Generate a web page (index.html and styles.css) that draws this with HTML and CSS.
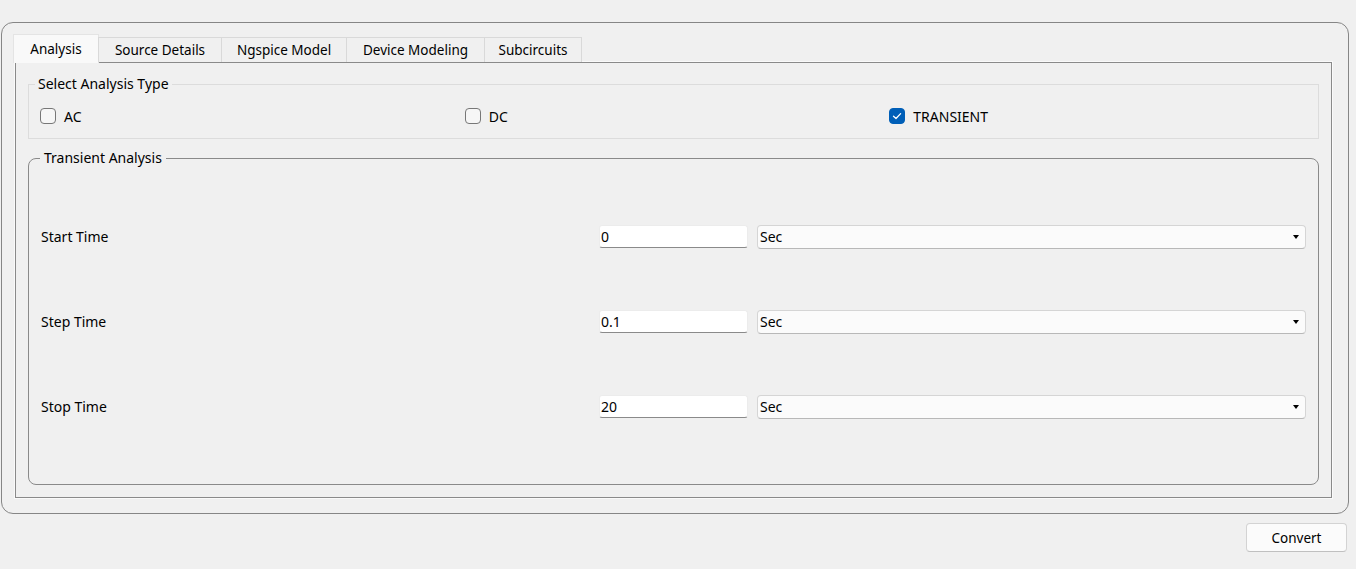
FILE: index.html
```html
<!DOCTYPE html>
<html lang="en">
<head>
<meta charset="utf-8">
<title>Kicad to Ngspice Converter</title>
<link rel="stylesheet" href="styles.css">
</head>
<body>
<div class="window">
  <div class="frame">
    <div class="tabwidget">
      <div class="tabbar">
        <div class="tab active">Analysis</div>
        <div class="tab">Source Details</div>
        <div class="tab">Ngspice Model</div>
        <div class="tab">Device Modeling</div>
        <div class="tab">Subcircuits</div>
      </div>
      <div class="pane">
        <fieldset class="group flat">
          <legend>Select Analysis Type</legend>
          <div class="checks">
            <label class="check"><span class="box"></span>AC</label>
            <label class="check"><span class="box"></span>DC</label>
            <label class="check"><span class="box checked"><svg width="10" height="8" viewBox="0 0 10 8"><path d="M1.5 4.2 L4 6.5 L8.6 1.6" fill="none" stroke="#fff" stroke-width="1.3" stroke-linecap="round" stroke-linejoin="round"/></svg></span>TRANSIENT</label>
          </div>
        </fieldset>
        <fieldset class="group boxed">
          <legend>Transient Analysis</legend>
          <div class="form">
            <div class="row">
              <span class="lbl">Start Time</span>
              <span class="input">0</span>
              <span class="combo">Sec<span class="arrow"></span></span>
            </div>
            <div class="row">
              <span class="lbl">Step Time</span>
              <span class="input">0.1</span>
              <span class="combo">Sec<span class="arrow"></span></span>
            </div>
            <div class="row">
              <span class="lbl">Stop Time</span>
              <span class="input">20</span>
              <span class="combo">Sec<span class="arrow"></span></span>
            </div>
          </div>
        </fieldset>
      </div>
    </div>
  </div>
  <div class="actions">
    <button class="btn">Convert</button>
  </div>
</div>
</body>
</html>
```
FILE: styles.css
```css
* { box-sizing: border-box; }
html, body {
  margin: 0;
  padding: 0;
  background: #f0f0f0;
}
body {
  font-family: "Noto Sans", "Open Sans", sans-serif;
  font-size: 13.5px;
  color: #000;
}
.window {
  padding: 22px 8px 0 1px;
}
.frame {
  width: 1348px;
  height: 492px;
  border: 1px solid #868686;
  border-radius: 12px;
  padding: 11px 0 0 11px;
}
.tabwidget {
  width: 1319px;
}
.tabbar {
  display: flex;
  height: 28px;
  align-items: flex-end;
  position: relative;
  z-index: 1;
}
.tab {
  height: 25px;
  padding: 0 16px;
  display: flex;
  align-items: center;
  justify-content: center;
  background: #f0f0f0;
  border: 1px solid #d9d9d9;
  border-bottom: none;
  margin-left: -1px;
  white-space: nowrap;
}
.tab.active {
  background: #f9f9f9;
  border-color: #e4e4e4;
  margin-left: 0;
  margin-bottom: -1px;
  height: 29px;
  width: 86px;
}
.tab:nth-child(2) { width: 124px; }
.tab:nth-child(3) { width: 126px; }
.tab:nth-child(4) { width: 139px; }
.tab:nth-child(5) { width: 98px; }
.pane {
  margin-left: 2px;
  height: 436px;
  border: 1px solid #8a8a8a;
  box-shadow: 0 0 0 1px #fafafa;
  padding: 12px 12px 0 12px;
  font-size: 14px;
}
.group {
  margin: 0;
  min-width: 0;
}
.group legend {
  padding: 0 3px;
  margin-left: 6px;
  line-height: 18px;
}
.flat {
  border: 1px solid #dcdcdc;
  height: 64px;
  padding: 0;
}
.checks {
  display: grid;
  grid-template-columns: repeat(3, 1fr);
  padding: 0 4px 0 11px;
  height: 36px;
  align-items: center;
  margin-top: 5px;
}
.check {
  display: flex;
  align-items: center;
  gap: 8px;
}
.box {
  width: 16px;
  height: 16px;
  border: 1px solid #777;
  border-radius: 4px;
  background: #f6f6f6;
  display: inline-flex;
  align-items: center;
  justify-content: center;
}
.box.checked {
  background: #005fb8;
  border-color: #005fb8;
}
.boxed {
  margin-top: 10px;
  border: 1px solid #8a8a8a;
  border-radius: 8px;
  height: 336px;
  padding: 0 12px 0 12px;
}
.boxed legend {
  margin-left: -1px;
  padding: 0 4px;
}
.form {
  padding-top: 27px;
}
.row {
  display: grid;
  grid-template-columns: 558px 149px 1fr;
  align-items: center;
  height: 85px;
}
.input {
  height: 23px;
  background: #fff;
  border: 1px solid #ececec;
  border-bottom: 1px solid #8a8a8a;
  border-radius: 3px;
  padding: 0 0 0 1px;
  display: flex;
  align-items: center;
}
.combo {
  margin-left: 9px;
  height: 24px;
  background: #fbfbfb;
  border: 1px solid #d5d5d5;
  border-bottom-color: #b8b8b8;
  border-radius: 4px;
  padding: 0 0 0 2px;
  display: flex;
  align-items: center;
  justify-content: space-between;
}
.arrow {
  width: 0;
  height: 0;
  border-left: 3.5px solid transparent;
  border-right: 3.5px solid transparent;
  border-top: 4px solid #000;
  margin-right: 6px;
}
.actions {
  display: flex;
  justify-content: flex-end;
  padding: 9px 0 0 0;
  width: 1346px;
}
.btn {
  width: 101px;
  height: 29px;
  font: inherit;
  color: #000;
  background: #fbfbfb;
  border: 1px solid #d3d3d3;
  border-bottom-color: #c0c0c0;
  border-radius: 4px;
  padding: 0;
}
```
